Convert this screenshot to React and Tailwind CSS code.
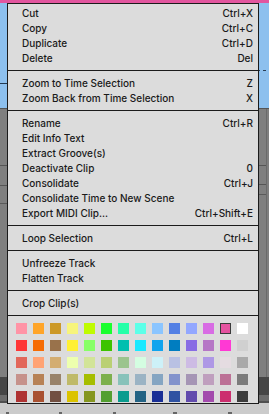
const groups = [
  {
    pad: "pt-[1px] pb-[5px]",
    items: [
      ["Cut", "Ctrl+X"],
      ["Copy", "Ctrl+C"],
      ["Duplicate", "Ctrl+D"],
      ["Delete", "Del"],
    ],
  },
  {
    pad: "pt-[4px] pb-[5px]",
    items: [
      ["Zoom to Time Selection", "Z"],
      ["Zoom Back from Time Selection", "X"],
    ],
  },
  {
    pad: "pt-[4px] pb-[5px]",
    items: [
      ["Rename", "Ctrl+R"],
      ["Edit Info Text", ""],
      ["Extract Groove(s)", ""],
      ["Deactivate Clip", "0"],
      ["Consolidate", "Ctrl+J"],
      ["Consolidate Time to New Scene", ""],
      ["Export MIDI Clip...", "Ctrl+Shift+E"],
    ],
  },
  { pad: "pt-[4px] pb-[5px]", items: [["Loop Selection", "Ctrl+L"]] },
  {
    pad: "pt-[4px] pb-[5px]",
    items: [
      ["Unfreeze Track", ""],
      ["Flatten Track", ""],
    ],
  },
  { pad: "pt-[4px] pb-[5px]", items: [["Crop Clip(s)", ""]] },
];

const palette = [
  ["#FF94A6", "#FFA529", "#CC9927", "#F7F47C", "#BFFB00", "#1AFF2F", "#25FFA8", "#5CFFE8", "#8BC5FF", "#5480E4", "#92A7FF", "#D86CE4", "#E553A0", "#FFFFFF"],
  ["#FF3636", "#F66C03", "#99724B", "#FFF034", "#87FF67", "#3DC300", "#00BFAF", "#19E9FF", "#10A4EE", "#007DC0", "#886CE4", "#B677C6", "#FF39D4", "#D0D0D0"],
  ["#E2675A", "#FFA374", "#D3AD71", "#EDFFAE", "#D2E498", "#BAD074", "#9BC48D", "#D4FDE1", "#CDF1F8", "#B9C1E3", "#CDBBE4", "#AE98E5", "#E5DCE1", "#A9A9A9"],
  ["#C6928B", "#B78256", "#99836A", "#BFBA69", "#A6BE00", "#7DB04D", "#88C2BA", "#9BB3C4", "#85A5C2", "#8393CC", "#A595B5", "#BF9FBE", "#BC7196", "#7B7B7B"],
  ["#AF3333", "#A95131", "#724F41", "#DBC300", "#85961F", "#539F31", "#0A9C8E", "#236384", "#1A2F96", "#2F52A2", "#624BAD", "#A34BAD", "#CC2E6E", "#3C3C3C"],
];

function Separator() {
  return <div className="h-px bg-[#1b1b1b]" />;
}

export default function App() {
  return (
    <div className="relative w-[269px] h-[414px] overflow-hidden bg-[#7f7f7f]">
      {/* arrangement behind the menu */}
      <div className="flex h-full">
        <div className="w-[7px] flex flex-col">
          <div className="h-[3px] bg-[#e2569f]" />
          <div className="h-[80px] bg-[#8dc0ee]" />
          <div className="h-px bg-[#233a52]" />
          <div className="h-[24px] bg-[#8dc0ee]" />
          <div className="h-px bg-[#555]" />
          <div className="h-[56px] bg-[#7f7f7f]" />
          <div className="h-px bg-[#555]" />
          <div className="h-[19px] bg-[#7f7f7f]" />
          <div className="h-px bg-[#555]" />
          <div className="h-[17px] bg-[#7f7f7f]" />
          <div className="h-px bg-[#5a5a5a]" />
          <div className="h-[173px] bg-[#7f7f7f]" />
          <div className="h-[18px] bg-[#464646]" />
          <div className="h-[6px] bg-[#6c6c6c]" />
          <div className="h-[2px] bg-[#505050]" />
          <div className="flex-1 bg-[#cbcbcb]" />
        </div>
        <div className="flex-1 flex flex-col">
          <div className="h-[3px] bg-[#e2569f]" />
          <div className="h-[105px] bg-[#8dc0ee]" />
          <div className="h-[269px] bg-[#7f7f7f]" />
          <div className="h-[18px] bg-[#464646]" />
          <div className="h-[6px] bg-[#6c6c6c]" />
          <div className="h-[2px] bg-[#505050]" />
          <div className="flex-1 bg-[#cbcbcb]" />
        </div>
        <div className="w-[11px] flex flex-col">
          <div className="h-[3px] bg-[#e2569f]" />
          <div className="h-[67px] bg-[#8dc0ee]" />
          <div className="h-px flex bg-[#8dc0ee]">
            <div className="w-[2px] bg-[#2a3e55]" />
            <div className="w-[3px]" />
            <div className="w-[3px] bg-[#2a3e55]" />
          </div>
          <div className="h-[37px] bg-[#8dc0ee]" />
          <div className="h-px bg-[#555]" />
          <div className="flex-1 flex">
            <div className="w-[8px] flex flex-col">
              <div className="h-[56px]" />
              <div className="h-px bg-[#555]" />
              <div className="h-[18px]" />
              <div className="h-px bg-[#555]" />
              <div className="h-[9px]" />
              <div className="h-px bg-[#5a5a5a]" />
            </div>
            <div className="w-px bg-[#6a6a6a]" />
          </div>
          <div className="h-[18px] bg-[#464646]" />
          <div className="h-[6px] bg-[#6c6c6c]" />
          <div className="h-[2px] bg-[#505050]" />
          <div className="h-[11px] bg-[#cbcbcb]" />
        </div>
      </div>

      {/* ruler ticks peeking out at the bottom */}
      <div className="absolute left-0 bottom-0 w-full h-[2px] flex">
        <div className="w-[6px]" />
        <div className="w-[3px] bg-[#666]" />
        <div className="w-[50px]" />
        <div className="w-[3px] bg-[#666]" />
        <div className="w-[51px]" />
        <div className="w-[3px] bg-[#666]" />
        <div className="w-[57px]" />
        <div className="w-[4px] bg-[#666]" />
        <div className="w-[51px]" />
        <div className="w-[4px] bg-[#666]" />
      </div>

      {/* context menu */}
      <div
        className="absolute left-[7px] top-[3px] w-[252px] border border-[#1b1b1b] bg-[#dcdcdc] text-[#1a1a1a]"
        style={{ fontFamily: "Inter, 'Noto Sans', sans-serif" }}
      >
        {groups.map((g, gi) => (
          <div key={gi}>
            {gi > 0 && <Separator />}
            <div className={g.pad}>
              {g.items.map(([label, key]) => (
                <div
                  key={label}
                  className="h-[15px] flex items-center justify-between pt-[1px] pl-[14px] pr-[5px] text-[10px] leading-none font-medium"
                >
                  <span>{label}</span>
                  <span>{key}</span>
                </div>
              ))}
            </div>
          </div>
        ))}
        <Separator />
        <div className="pt-[7px] pb-[1px] pl-[8px] flex flex-col gap-[6px]">
          {palette.map((row, ri) => (
            <div key={ri} className="flex gap-[6px]">
              {row.map((c, ci) => (
                <div
                  key={ci}
                  className={
                    ri === 0 && ci === 12
                      ? "w-[11px] h-[11px] border border-[#3a3a3a]"
                      : "w-[11px] h-[11px]"
                  }
                  style={{ backgroundColor: c }}
                />
              ))}
            </div>
          ))}
        </div>
      </div>
    </div>
  );
}
